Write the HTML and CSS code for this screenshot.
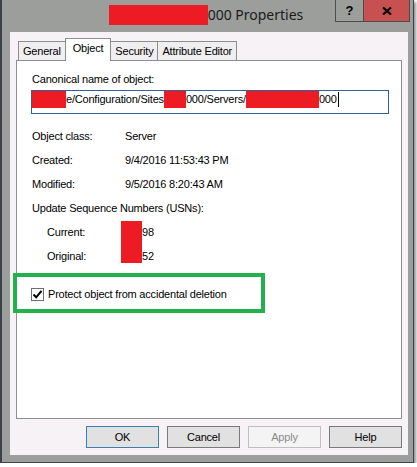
FILE: index.html
```html
<!DOCTYPE html>
<html lang="en">
<head>
  <meta charset="UTF-8">
  <title>000 Properties</title>
  <link rel="stylesheet" href="styles.css">
</head>
<body>

  <div class="window">
    <div class="titlebar">
      <div class="title"><span class="redact redact-title"></span>000 Properties</div>
      <div class="caption">
        <span class="cap-btn cap-help">?</span>
        <span class="cap-btn cap-close">
          <svg width="10" height="8" viewBox="0 0 10 8"><path d="M1 0.5 L9 7.5 M9 0.5 L1 7.5" stroke="#000" stroke-width="2.2" fill="none"/></svg>
        </span>
      </div>
    </div>

    <div class="client">
      <div class="tabs">
        <div class="tab">General</div>
        <div class="tab tab-active">Object</div>
        <div class="tab">Security</div>
        <div class="tab">Attribute Editor</div>
      </div>

      <div class="panel">
        <div class="label">Canonical name of object:</div>
        <div class="textbox">
          <span class="redact redact-cn1"></span><span>e/Configuration/Sites</span><span class="redact redact-cn2"></span><span>000/Servers/</span><span class="redact redact-cn3"></span><span>000</span><span class="caret"></span>
        </div>

        <div class="props">
          <span>Object class:</span><span>Server</span>
          <span>Created:</span><span>9/4/2016 11:53:43 PM</span>
          <span>Modified:</span><span>9/5/2016 8:20:43 AM</span>
        </div>

        <div class="label usn-head">Update Sequence Numbers (USNs):</div>
        <div class="usn">
          <span>Current:</span><span class="redact redact-usn"></span><span>98</span>
          <span>Original:</span><span>52</span>
        </div>

        <div class="highlight">
          <label class="check">
            <span class="check-box">
              <svg width="11" height="11" viewBox="0 0 11 11"><path d="M1.5 5.5 L4.2 8.3 L9.5 1.8" stroke="#000" stroke-width="2" fill="none"/></svg>
            </span>
            Protect object from accidental deletion
          </label>
        </div>
      </div>

      <div class="buttons">
        <button class="btn btn-default">OK</button>
        <button class="btn">Cancel</button>
        <button class="btn" disabled>Apply</button>
        <button class="btn">Help</button>
      </div>
    </div>
  </div>

</body>
</html>
```

FILE: styles.css
```css
* {
  box-sizing: border-box;
}

body {
  margin: 0;
  padding: 0;
  background-color: #ffffff;
  font-family: 'Liberation Sans', Arial, sans-serif;
  font-size: 11px;
  letter-spacing: -0.2px;
  line-height: 13px;
  color: #000;
}

.window {
  width: 414px;
  height: 463px;
  background-color: #9c9e9b;
  border: 1px solid #3b424a;
  border-top: 0;
  border-left-width: 2px;
  padding: 0 5px 7px 8px;
  box-shadow: 2px 2px 3px rgba(0, 0, 0, 0.45);
  display: flex;
  flex-direction: column;
}

/* title bar */
.titlebar {
  height: 32px;
  margin: 0 -5px 0 -8px;
  padding-right: 3px;
  display: grid;
  grid-template-columns: 1fr auto 1fr;
}

.title {
  grid-column: 2;
  display: flex;
  align-items: flex-start;
  padding-top: 5px;
  font-family: 'Noto Sans', sans-serif;
  font-size: 14px;
  letter-spacing: 0;
  line-height: 20px;
  color: #1b1b1b;
}

.caption {
  grid-column: 3;
  justify-self: end;
  display: flex;
}

.cap-btn {
  height: 22px;
  border: 1px solid #4b4d4c;
  border-top: 0;
  display: flex;
  align-items: center;
  justify-content: center;
}

.cap-help {
  width: 29px;
  font-weight: bold;
  font-size: 13px;
  letter-spacing: 0;
}

.cap-close {
  width: 47px;
  margin-left: -1px;
  background-color: #c75050;
}

/* client area */
.client {
  flex: 1;
  background-color: #f6f2f6;
  padding: 6px 6px 7px 6px;
  display: flex;
  flex-direction: column;
}

.tabs {
  height: 22px;
  padding-left: 2px;
  display: flex;
  align-items: flex-end;
}

.tab {
  height: 19px;
  padding: 3px 4px 0 4px;
  border: 1px solid #8d8e93;
  border-bottom: 0;
  background-color: #f0eff0;
  margin-left: -1px;
}

.tab:first-child {
  margin-left: 0;
}

.tab-active {
  position: relative;
  z-index: 1;
  height: 23px;
  padding: 3px 7px 0 7px;
  margin-bottom: -1px;
  background-color: #ffffff;
}

.panel {
  flex: 1;
  background-color: #ffffff;
  border: 1px solid #8d8e93;
  padding: 12px 15px 0 15px;
}

.textbox {
  width: 358px;
  height: 24px;
  margin: 4px 0 0 -1px;
  border: 1px solid #2f6296;
  line-height: 17px;
  display: flex;
  align-items: flex-start;
}

.redact {
  display: inline-block;
  background-color: #ed1c24;
}

.redact-title {
  width: 99px;
  height: 20px;
}

.redact-cn1 {
  width: 34px;
  height: 17px;
}

.redact-cn2 {
  width: 22px;
  height: 17px;
}

.redact-cn3 {
  width: 73px;
  height: 17px;
}

.caret {
  width: 1px;
  height: 15px;
  margin: 1px 0 0 1px;
  background-color: #000;
}

.props {
  margin-top: 16px;
  display: grid;
  grid-template-columns: 93px auto;
  row-gap: 11px;
}

.usn-head {
  margin-top: 11px;
}

.usn {
  margin-top: 11px;
  padding-left: 15px;
  display: grid;
  grid-template-columns: 74px 21px auto;
  row-gap: 11px;
}

.redact-usn {
  grid-column: 2;
  grid-row: 1 / 3;
  margin-top: -5px;
}

/* green annotation box */
.highlight {
  width: 252px;
  height: 40px;
  margin: 10px 0 0 -19px;
  border: 4px solid #22b14c;
  padding: 11px 0 0 14px;
}

.check {
  display: flex;
  align-items: center;
  gap: 4px;
}

.check-box {
  width: 13px;
  height: 13px;
  border: 1px solid #6f6f6f;
  background-color: #fff;
  display: flex;
  align-items: center;
  justify-content: center;
}

/* dialog buttons */
.buttons {
  margin-top: 7px;
  display: flex;
  justify-content: flex-end;
  gap: 8px;
}

.btn {
  width: 73px;
  height: 22px;
  padding: 0;
  font-family: inherit;
  font-size: 11px;
  letter-spacing: -0.2px;
  color: #000;
  background-color: #e1e1e1;
  border: 1px solid #7a7a7a;
  border-radius: 0;
}

.btn-default {
  border-color: #3c7fb1;
}

.btn:disabled {
  background-color: #f4f4f4;
  border-color: #bfbfbf;
  color: #8a8a8a;
}
```
